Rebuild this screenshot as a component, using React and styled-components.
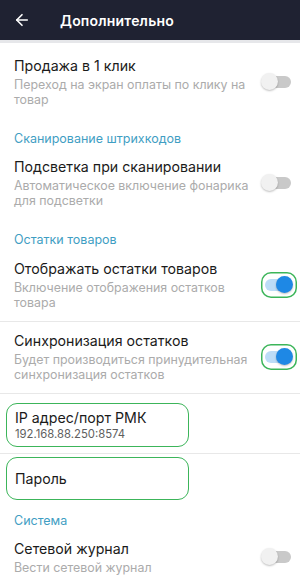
import React from 'react'
import styled, { createGlobalStyle } from 'styled-components'
import { ArrowLeft } from 'lucide-react'

const GlobalStyle = createGlobalStyle`
  html, body { margin: 0; padding: 0; background: #fff; }
  body { font-family: Inter, "Open Sans", sans-serif; }
`

const Page = styled.div`
  width: 300px;
  height: 584px;
  overflow: hidden;
  background: #fff;
`

const Header = styled.div`
  height: 40px;
  background: #1f2232;
  display: flex;
  align-items: center;
  padding-left: 13px;
  gap: 29px;
  color: #fff;
  border-bottom: 3px solid #e6e7ea;
`

const Title = styled.div`
  font-size: 14px;
  font-weight: 600;
  letter-spacing: 0.2px;
`

const List = styled.div`
  padding-top: 6px;
`

const Section = styled.div`
  padding: 13px 14px 3px;
  font-size: 12.5px;
  line-height: 16px;
  color: #3f9ec3;
`

const Row = styled.div`
  display: flex;
  align-items: center;
  padding: ${p => p.$top || 7}px 3px 11px 14px;
  border-bottom: ${p => (p.$divided ? '1px solid #e8e8e8' : 'none')};
`

const Texts = styled.div`
  flex: 1;
  padding-right: 12px;
`

const Name = styled.div`
  font-size: 14.2px;
  line-height: 20px;
  color: #1b1b1b;
  margin-bottom: 2px;
`

const Hint = styled.div`
  font-size: 12.4px;
  line-height: 14.5px;
  color: #ababab;
`

const Switch = styled.div`
  position: relative;
  width: 36px;
  height: 26px;
  border-radius: 10px;
  flex-shrink: 0;
  box-shadow: ${p => (p.$marked ? 'inset 0 0 0 1.5px #3cb55a' : 'none')};
`

const Track = styled.div`
  position: absolute;
  left: 4px;
  top: 7px;
  width: 26px;
  height: 12px;
  border-radius: 6px;
  background: ${p => (p.$on ? '#bcdcf7' : '#c9c9c9')};
`

const Thumb = styled.div`
  position: absolute;
  top: 4px;
  left: ${p => (p.$on ? '15px' : '0px')};
  width: 17px;
  height: 17px;
  border-radius: 50%;
  background: ${p => (p.$on ? '#1e88e5' : '#f1f1f1')};
  box-shadow: 0 1px 2px rgba(0, 0, 0, 0.25);
`

const FieldWrap = styled.div`
  padding: ${p => p.$pad};
  border-bottom: ${p => (p.$divided ? '1px solid #e8e8e8' : 'none')};
`

const Field = styled.div`
  margin: 0 111px 0 6px;
  height: ${p => p.$h}px;
  box-sizing: border-box;
  border: 1.5px solid #3cb55a;
  border-radius: 11px;
  padding: 0 8px;
  display: flex;
  flex-direction: column;
  justify-content: center;
`

const FieldName = styled.div`
  font-size: 14.2px;
  line-height: 18px;
  color: #1b1b1b;
`

const FieldValue = styled.div`
  font-size: 11.3px;
  line-height: 15px;
  color: #5e5e5e;
`

function Toggle({ on, marked }) {
  return (
    <Switch $marked={marked}>
      <Track $on={on} />
      <Thumb $on={on} />
    </Switch>
  )
}

function Setting({ name, hint, on, marked, divided, top }) {
  return (
    <Row $divided={divided} $top={top}>
      <Texts>
        <Name>{name}</Name>
        <Hint>{hint}</Hint>
      </Texts>
      <Toggle on={on} marked={marked} />
    </Row>
  )
}

export default function App() {
  return (
    <Page>
      <GlobalStyle />
      <Header>
        <ArrowLeft size={18} strokeWidth={2.2} />
        <Title>Дополнительно</Title>
      </Header>
      <List>
        <Setting name="Продажа в 1 клик" hint="Переход на экран оплаты по клику на товар" />
        <Section>Сканирование штрихкодов</Section>
        <Setting name="Подсветка при сканировании" hint="Автоматическое включение фонарика для подсветки" />
        <Section>Остатки товаров</Section>
        <Setting name="Отображать остатки товаров" hint="Включение отображения остатков товара" on marked divided top={8} />
        <Setting name="Синхронизация остатков" hint="Будет производиться принудительная синхронизация остатков" on marked divided top={9} />
        <FieldWrap $pad="9px 0 6px" $divided>
          <Field $h={44}>
            <FieldName>IP адрес/порт РМК</FieldName>
            <FieldValue>192.168.88.250:8574</FieldValue>
          </Field>
        </FieldWrap>
        <FieldWrap $pad="3px 0 0">
          <Field $h={43}>
            <FieldName>Пароль</FieldName>
          </Field>
        </FieldWrap>
        <Section>Система</Section>
        <Setting name="Сетевой журнал" hint="Вести сетевой журнал" />
      </List>
    </Page>
  )
}
